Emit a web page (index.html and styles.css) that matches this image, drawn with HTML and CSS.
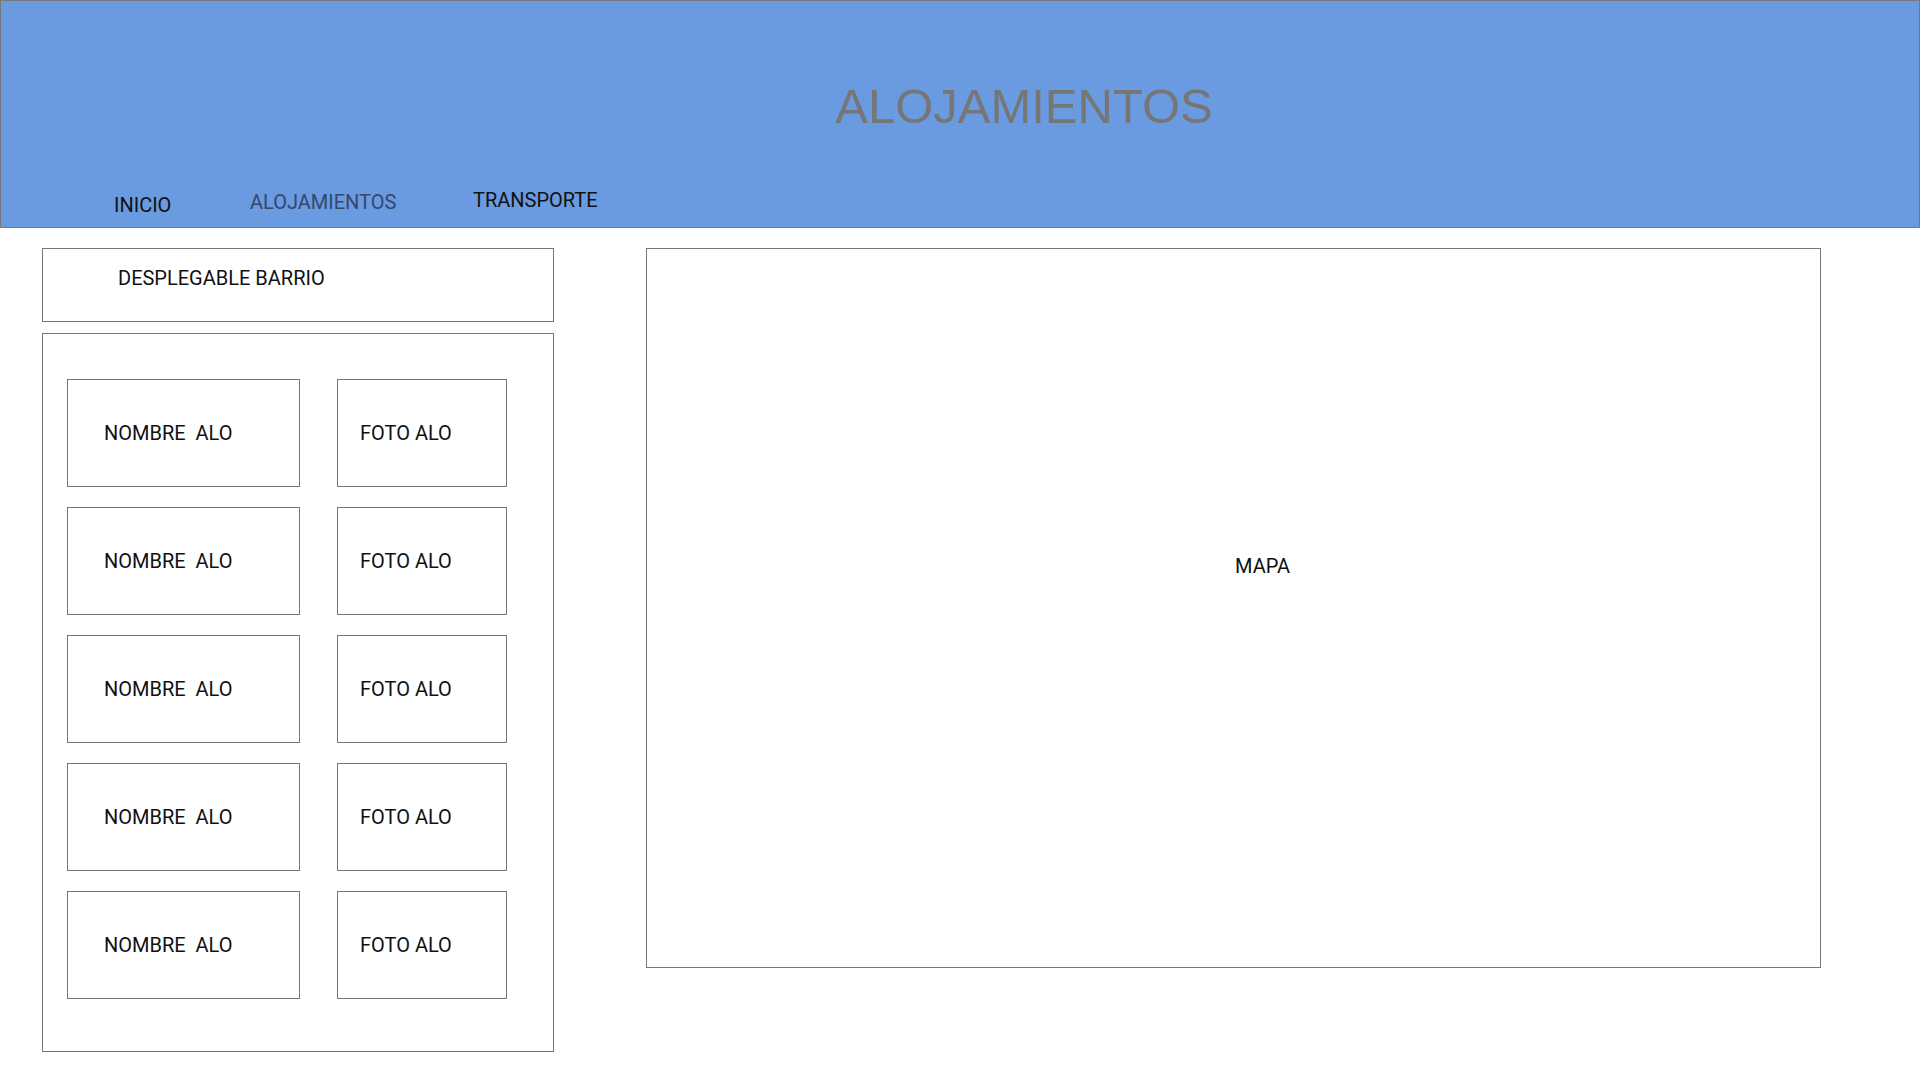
FILE: index.html
```html
<!DOCTYPE html>
<html lang="es">
<head>
<meta charset="utf-8">
<title>Alojamientos</title>
<link rel="stylesheet" href="styles.css">
</head>
<body>
<header class="header">
  <h1 class="title">ALOJAMIENTOS</h1>
  <nav class="nav">
    <a class="nav-link nav-inicio" href="#">INICIO</a>
    <a class="nav-link nav-aloj" href="#">ALOJAMIENTOS</a>
    <a class="nav-link nav-trans" href="#">TRANSPORTE</a>
  </nav>
</header>
<main class="main">
  <section class="sidebar">
    <div class="dropdown">DESPLEGABLE BARRIO</div>
    <div class="list">
      <div class="card card-name">NOMBRE&nbsp; ALO</div>
      <div class="card card-photo">FOTO ALO</div>
      <div class="card card-name">NOMBRE&nbsp; ALO</div>
      <div class="card card-photo">FOTO ALO</div>
      <div class="card card-name">NOMBRE&nbsp; ALO</div>
      <div class="card card-photo">FOTO ALO</div>
      <div class="card card-name">NOMBRE&nbsp; ALO</div>
      <div class="card card-photo">FOTO ALO</div>
      <div class="card card-name">NOMBRE&nbsp; ALO</div>
      <div class="card card-photo">FOTO ALO</div>
    </div>
  </section>
  <section class="map">MAPA</section>
</main>
</body>
</html>
```

FILE: styles.css
```css
* { box-sizing: border-box; }

html, body {
  margin: 0;
  padding: 0;
  background: #ffffff;
}

body {
  font-family: Roboto, "Liberation Sans", Arial, sans-serif;
  font-size: 20px;
  line-height: 24px;
  color: #111111;
  height: 1080px;
  overflow: hidden;
}

.header {
  height: 228px;
  background: #6a9ae0;
  border: 1px solid #777777;
  padding-top: 77px;
}

.title {
  margin: 0;
  padding-left: 128px;
  text-align: center;
  font-family: "Liberation Sans", Arial, sans-serif;
  font-weight: normal;
  font-size: 49px;
  line-height: 57px;
  color: #767676;
}

.nav {
  display: grid;
  grid-template-columns: 136px 223px auto;
  align-items: start;
  padding-left: 113px;
  margin-top: 53px;
}

.nav-link {
  text-decoration: none;
  color: #111111;
  font-size: 20px;
  line-height: 24px;
}

.nav-inicio { margin-top: 5px; }
.nav-aloj { margin-top: 2px; color: #34486a; }
.nav-trans { margin-top: 0; }

.main {
  display: flex;
  align-items: flex-start;
  gap: 92px;
  padding: 20px 0 0 42px;
}

.sidebar {
  width: 512px;
  display: flex;
  flex-direction: column;
  gap: 11px;
}

.dropdown {
  height: 74px;
  border: 1px solid #777777;
  padding: 17px 0 0 75px;
}

.list {
  height: 719px;
  border: 1px solid #777777;
  padding: 45px 0 0 24px;
  display: grid;
  grid-template-columns: 233px 170px;
  grid-auto-rows: 108px;
  column-gap: 37px;
  row-gap: 20px;
  align-content: start;
}

.card {
  border: 1px solid #777777;
  display: flex;
  align-items: center;
  white-space: nowrap;
}

.card-name { padding-left: 36px; }
.card-photo { padding-left: 22px; }

.map {
  width: 1175px;
  height: 720px;
  border: 1px solid #777777;
  padding: 305px 0 0 588px;
}
```
